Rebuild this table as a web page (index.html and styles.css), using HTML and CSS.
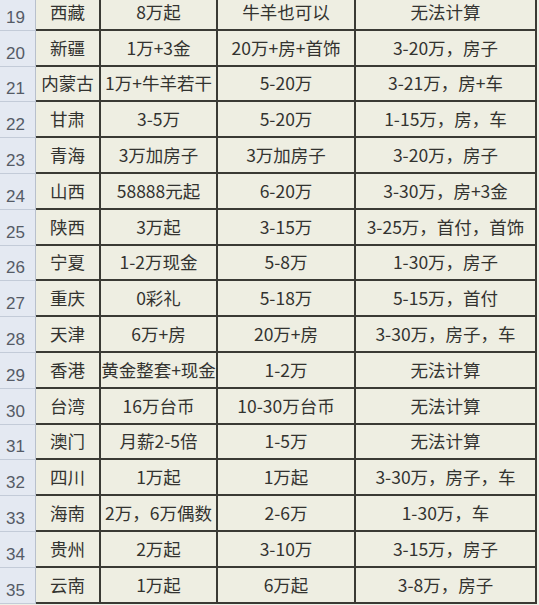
FILE: index.html
```html
<!DOCTYPE html>
<html lang="zh-CN">
<head>
<meta charset="utf-8">
<title>彩礼表</title>
<link rel="stylesheet" href="styles.css">
</head>
<body>
<div class="sheet">
  <div class="rh">19</div><div class="c">西藏</div><div class="c">8万起</div><div class="c">牛羊也可以</div><div class="c">无法计算</div>
  <div class="rh">20</div><div class="c">新疆</div><div class="c">1万+3金</div><div class="c">20万+房+首饰</div><div class="c">3-20万，房子</div>
  <div class="rh">21</div><div class="c">内蒙古</div><div class="c">1万+牛羊若干</div><div class="c">5-20万</div><div class="c">3-21万，房+车</div>
  <div class="rh">22</div><div class="c">甘肃</div><div class="c">3-5万</div><div class="c">5-20万</div><div class="c">1-15万，房，车</div>
  <div class="rh">23</div><div class="c">青海</div><div class="c">3万加房子</div><div class="c">3万加房子</div><div class="c">3-20万，房子</div>
  <div class="rh">24</div><div class="c">山西</div><div class="c">58888元起</div><div class="c">6-20万</div><div class="c">3-30万，房+3金</div>
  <div class="rh">25</div><div class="c">陕西</div><div class="c">3万起</div><div class="c">3-15万</div><div class="c">3-25万，首付，首饰</div>
  <div class="rh">26</div><div class="c">宁夏</div><div class="c">1-2万现金</div><div class="c">5-8万</div><div class="c">1-30万，房子</div>
  <div class="rh">27</div><div class="c">重庆</div><div class="c">0彩礼</div><div class="c">5-18万</div><div class="c">5-15万，首付</div>
  <div class="rh">28</div><div class="c">天津</div><div class="c">6万+房</div><div class="c">20万+房</div><div class="c">3-30万，房子，车</div>
  <div class="rh">29</div><div class="c">香港</div><div class="c">黄金整套+现金</div><div class="c">1-2万</div><div class="c">无法计算</div>
  <div class="rh">30</div><div class="c">台湾</div><div class="c">16万台币</div><div class="c">10-30万台币</div><div class="c">无法计算</div>
  <div class="rh">31</div><div class="c">澳门</div><div class="c">月薪2-5倍</div><div class="c">1-5万</div><div class="c">无法计算</div>
  <div class="rh">32</div><div class="c">四川</div><div class="c">1万起</div><div class="c">1万起</div><div class="c">3-30万，房子，车</div>
  <div class="rh">33</div><div class="c">海南</div><div class="c">2万，6万偶数</div><div class="c">2-6万</div><div class="c">1-30万，车</div>
  <div class="rh">34</div><div class="c">贵州</div><div class="c">2万起</div><div class="c">3-10万</div><div class="c">3-15万，房子</div>
  <div class="rh">35</div><div class="c">云南</div><div class="c">1万起</div><div class="c">6万起</div><div class="c">3-8万，房子</div>
</div>
</body>
</html>
```

FILE: styles.css
```css
html, body {
  margin: 0;
  padding: 0;
  background: #eef0e6;
  overflow: hidden;
}

.sheet {
  display: grid;
  grid-template-columns: 36px 65px 117px 138px 181px;
  grid-auto-rows: 35.8px;
  margin-top: -5px;
  width: 537px;
}

.rh {
  box-sizing: border-box;
  background: #e4e9f2;
  border-bottom: 1px solid #c3cbd8;
  border-right: 1px solid #b8c0cc;
  color: #555b66;
  font-family: "Liberation Sans", Arial, sans-serif;
  font-size: 17px;
  display: flex;
  align-items: flex-end;
  padding: 0 0 2px 6px;
}

.c {
  box-sizing: border-box;
  background: #eeeee2;
  border-right: 2px solid #3a3a34;
  border-bottom: 2px solid #3a3a34;
  color: #333330;
  font-family: "Noto Sans CJK SC", sans-serif;
  font-size: 17.5px;
  display: flex;
  align-items: center;
  justify-content: center;
  white-space: nowrap;
  padding-bottom: 1px;
}
```
